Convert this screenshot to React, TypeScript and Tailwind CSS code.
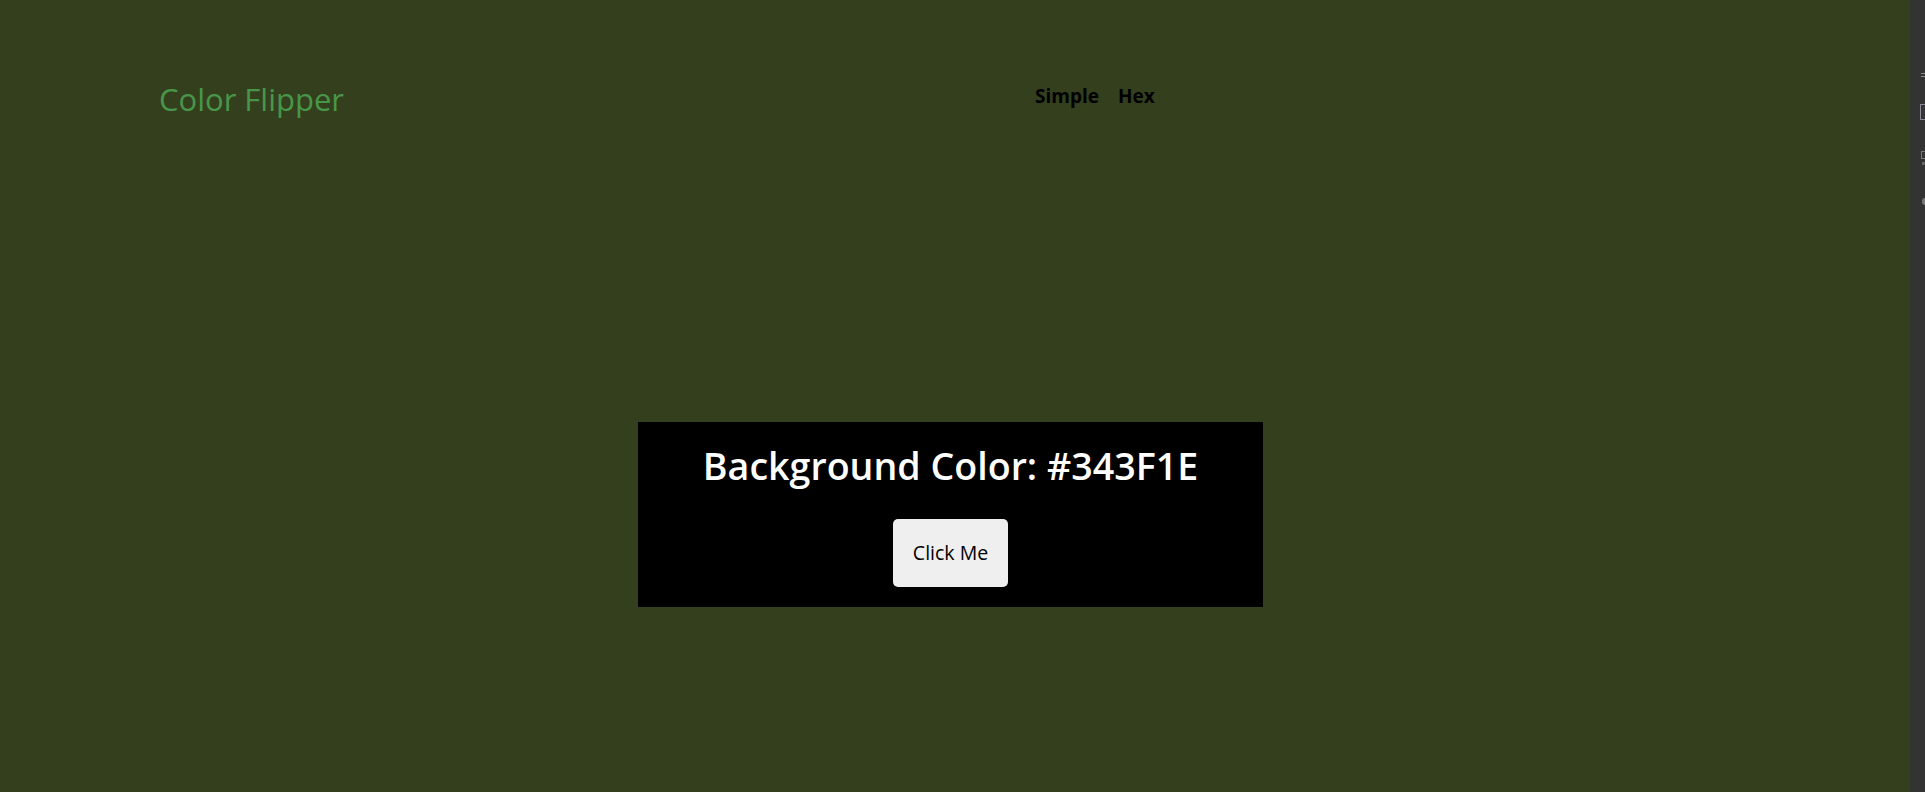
import React from "react";

export default function App() {
  return (
    <div
      className="flex h-[792px] w-full overflow-hidden bg-[#343f1e]"
      style={{ fontFamily: '"Open Sans", "Noto Sans", sans-serif' }}
    >
      <div className="flex flex-1 flex-col">
        <header className="flex items-start pt-[79px] pl-[159px]">
          <div className="w-[876px]">
            <span className="text-[31px] leading-[40px] text-[#489648]">Color Flipper</span>
          </div>
          <nav className="flex gap-[19px] pt-[4px] text-[19px] font-bold leading-[26px] text-black">
            <span>Simple</span>
            <span>Hex</span>
          </nav>
        </header>
        <div className="ml-[638px] mt-[303px] flex h-[185px] w-[625px] flex-col items-center bg-black pt-[22px]">
          <h2 className="text-[37.6px] font-semibold leading-[44px] text-white">Background Color: #343F1E</h2>
          <button className="mt-[31px] rounded-[5px] bg-[#efefef] px-[20px] py-[20px] text-[19.5px] leading-[28px] text-black">
            Click Me
          </button>
        </div>
      </div>
      <div className="flex w-[15px] flex-col items-end bg-[#333333] pt-[73px]">
        <div className="h-[4px] w-[4px] border-t border-b border-[#8a8a8a]" />
        <div className="mt-[27px] h-[16px] w-[5px] rounded-l-[1px] border-l border-t border-b border-[#8a8a9a]" />
        <div className="mt-[31px] h-[8px] w-[4px] border-l border-t border-b border-[#777]" />
        <div className="mt-[3px] h-[3px] w-[3px] bg-[#666]" />
        <div className="mt-[33px] h-[7px] w-[3px] rounded-l-full bg-[#777]" />
      </div>
    </div>
  );
}
